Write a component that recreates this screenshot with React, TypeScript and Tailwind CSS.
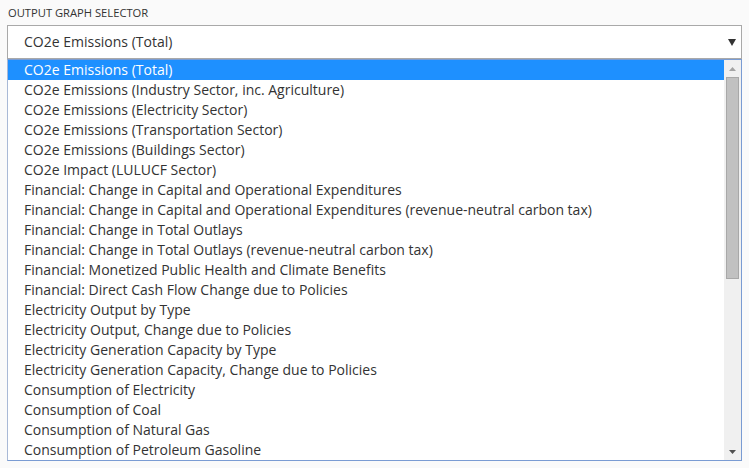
import React from "react";

const items = [
  "CO2e Emissions (Total)",
  "CO2e Emissions (Industry Sector, inc. Agriculture)",
  "CO2e Emissions (Electricity Sector)",
  "CO2e Emissions (Transportation Sector)",
  "CO2e Emissions (Buildings Sector)",
  "CO2e Impact (LULUCF Sector)",
  "Financial: Change in Capital and Operational Expenditures",
  "Financial: Change in Capital and Operational Expenditures (revenue-neutral carbon tax)",
  "Financial: Change in Total Outlays",
  "Financial: Change in Total Outlays (revenue-neutral carbon tax)",
  "Financial: Monetized Public Health and Climate Benefits",
  "Financial: Direct Cash Flow Change due to Policies",
  "Electricity Output by Type",
  "Electricity Output, Change due to Policies",
  "Electricity Generation Capacity by Type",
  "Electricity Generation Capacity, Change due to Policies",
  "Consumption of Electricity",
  "Consumption of Coal",
  "Consumption of Natural Gas",
  "Consumption of Petroleum Gasoline",
];

export default function App() {
  return (
    <div
      className="w-[749px] h-[468px] bg-[#fafafa] overflow-hidden text-[#333]"
      style={{ fontFamily: '"Open Sans", sans-serif' }}
    >
      <div className="h-[25px] pl-[8px] pt-[6px] text-[11.2px] leading-[14px] text-[#333]">
        OUTPUT GRAPH SELECTOR
      </div>
      <div className="ml-[7px] w-[735px]">
        <div className="h-[34px] border border-[#a9a9a9] bg-white flex items-center pl-[16px] pr-[5px] justify-between">
          <span className="text-[14px] leading-[20px]">CO2e Emissions (Total)</span>
          <svg width="8" height="7" viewBox="0 0 8 7" className="mt-[1px]">
            <path d="M0 0H8L4 7Z" fill="#333" />
          </svg>
        </div>
        <div className="h-[402px] border border-[#7a9cd3] border-l-[#a9b9d6] bg-white flex">
          <div className="flex-1 overflow-hidden">
            {items.map((t, i) => (
              <div
                key={t}
                className={
                  i === 0
                    ? "h-[20px] leading-[20px] text-[14px] pl-[16px] whitespace-nowrap bg-[#1e90ff] text-white"
                    : "h-[20px] leading-[20px] text-[14px] pl-[16px] whitespace-nowrap text-[#333]"
                }
              >
                {t}
              </div>
            ))}
          </div>
          <div className="w-[17px] bg-[#f0f0f0] flex flex-col items-center">
            <div className="h-[17px] flex items-center justify-center">
              <svg width="7" height="4" viewBox="0 0 7 4">
                <path d="M3.5 0L7 4H0Z" fill="#a3a3a3" />
              </svg>
            </div>
            <div className="w-[13px] h-[202px] bg-[#c1c1c1] border border-[#a8a8a8]" />
            <div className="flex-1" />
            <div className="h-[17px] flex items-center justify-center">
              <svg width="7" height="4" viewBox="0 0 7 4">
                <path d="M0 0H7L3.5 4Z" fill="#505050" />
              </svg>
            </div>
          </div>
        </div>
      </div>
    </div>
  );
}
